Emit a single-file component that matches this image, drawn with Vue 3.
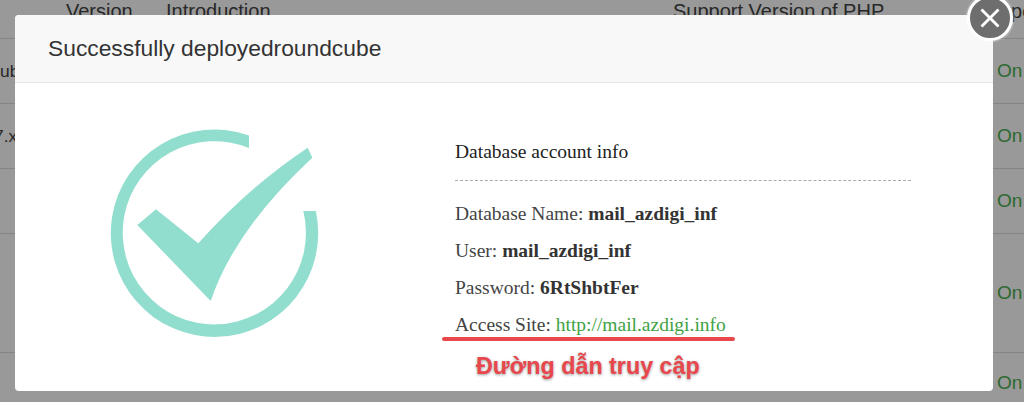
<script setup>
const rows = [
  { h: 65, name: 'ub', intro: '', php: '' },
  { h: 65, name: '7.x', intro: '', php: '' },
  { h: 65, name: '', intro: '', php: '' },
  { h: 119, name: '', intro: '', php: '' },
  { h: 60, name: '', intro: 'Simple easy to use modern browser based mail client and ready', php: '5.3,5.4,5.5,5.6,7.0,7.1,7.2,7.3,7.4' }
]
const info = [
  { label: 'Database Name:', value: 'mail_azdigi_inf' },
  { label: 'User:', value: 'mail_azdigi_inf' },
  { label: 'Password:', value: '6RtShbtFer' }
]
</script>

<template>
  <div class="page">
    <div class="table">
      <div class="row head">
        <span></span>
        <span>Version</span>
        <span>Introduction</span>
        <span>Support Version of PHP</span>
        <span class="type">Type</span>
      </div>
      <div v-for="(r, i) in rows" :key="i" class="row" :style="{ height: r.h + 'px' }">
        <span class="name">{{ r.name }}</span>
        <span></span>
        <span class="cell">{{ r.intro }}</span>
        <span class="cell">{{ r.php }}</span>
        <span class="on">On</span>
      </div>
    </div>

    <div class="backdrop"></div>

    <div class="modal">
      <header class="modal-head">Successfully deployedroundcube</header>
      <div class="modal-body">
        <div class="icon-col">
          <svg class="check" viewBox="90 110 260 240" width="260" height="240" aria-hidden="true">
            <path
              fill="#92dece"
              d="M249 135.4 A103.7 103.7 0 1 0 315.8 211 L303.3 211 A91.6 91.6 0 1 1 249 148 Z"
            />
            <path
              fill="#92dece"
              d="M137.3 225 L156 209.3 L198.3 243.3 Q250 186 307.7 147.7 L312.3 157.7 Q234.5 230 210.7 301 Z"
            />
          </svg>
        </div>
        <div class="info-col">
          <h3 class="info-title">Database account info</h3>
          <p v-for="item in info" :key="item.label" class="info-row">
            {{ item.label }} <b>{{ item.value }}</b>
          </p>
          <p class="info-row access">
            Access Site: <a class="link">http://mail.azdigi.info</a>
            <i class="underline"></i>
          </p>
          <div class="note">Đường dẫn truy cập</div>
        </div>
      </div>
    </div>

    <div class="close">
      <svg viewBox="0 0 40 40" width="40" height="40" aria-hidden="true">
        <path d="M12.5 10.5 L20 18 L27.5 10.5 L29.5 12.5 L22 20 L29.5 27.5 L27.5 29.5 L20 22 L12.5 29.5 L10.5 27.5 L18 20 L10.5 12.5 Z" fill="#fff" />
      </svg>
    </div>
  </div>
</template>

<style>
html, body { margin: 0; background: #fff; }
</style>

<style scoped>
.page {
  position: relative;
  width: 1024px;
  height: 402px;
  overflow: hidden;
  font-family: "Liberation Sans", Arial, sans-serif;
  background: #fff;
}
.table { width: 1100px; color: #444; font-size: 17.4px; }
.row {
  display: grid;
  grid-template-columns: 66px 100px 507px 324px 103px;
  align-items: center;
  box-sizing: border-box;
  border-bottom: 1px solid #ddd;
  white-space: nowrap;
}
.row:last-child { border-bottom: 0; }
.row:last-child .cell { align-self: end; line-height: 20px; padding-bottom: 21px; }
.row:nth-child(3) .name { margin-left: -6px; }
.head { height: 39px; font-size: 20px; align-items: start; line-height: 23px; }
.type { margin-left: -7px; }
.on { color: #4caf50; font-size: 19px; }
.backdrop {
  position: absolute;
  inset: 0;
  background: rgba(0, 0, 0, 0.4);
}
.modal {
  position: absolute;
  left: 15px;
  top: 15px;
  width: 978px;
  height: 376px;
  background: #fff;
  border-radius: 4px;
  overflow: hidden;
  display: flex;
  flex-direction: column;
}
.modal-head {
  box-sizing: border-box;
  height: 68px;
  padding: 0 33px;
  display: flex;
  align-items: center;
  font-size: 22.8px;
  color: #333;
  background: #f8f8f8;
  border-bottom: 1px solid #e6e6e6;
}
.modal-body { flex: 1; display: flex; font-family: "Liberation Serif", "Times New Roman", serif; }
.icon-col { box-sizing: border-box; width: 440px; padding: 27px 0 0 75px; }
.check { display: block; }
.info-col { width: 456px; padding-top: 50px; position: relative; }
.info-title {
  margin: 0 0 14px;
  padding-bottom: 10px;
  border-bottom: 1px dashed #aaa;
  font-size: 19.5px;
  font-weight: 400;
  line-height: 37px;
  color: #222;
}
.info-row {
  position: relative;
  margin: 0;
  font-size: 19.5px;
  line-height: 37px;
  color: #444;
}
.info-row b { color: #333; }
.link { color: #3fa244; }
.underline {
  position: absolute;
  left: -13px;
  top: 31px;
  width: 293px;
  height: 4px;
  border-radius: 2px;
  background: #e8474c;
}
.note {
  margin: 10px 0 0 21px;
  font-family: "Liberation Sans", Arial, sans-serif;
  font-size: 23.3px;
  line-height: 26px;
  font-weight: 700;
  color: #e8474c;
  text-shadow: 0 1px 3px rgba(0, 0, 0, 0.4);
}
.close {
  position: absolute;
  left: 967px;
  top: -5px;
  width: 40px;
  height: 40px;
  border-radius: 50%;
  background: #6e6e6e;
  border: 3px solid #fff;
  box-shadow: 0 0 3px rgba(255, 255, 255, 0.8);
  display: flex;
  align-items: center;
  justify-content: center;
}
</style>
